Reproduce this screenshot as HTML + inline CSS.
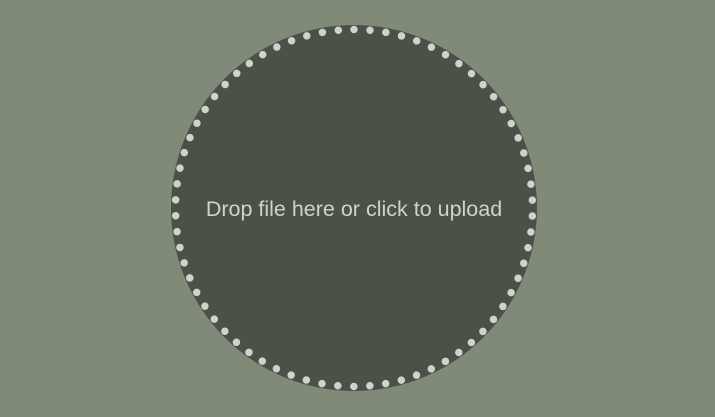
<!DOCTYPE html>
<html><head><style>
html,body{margin:0;padding:0;width:715px;height:417px;background:#7f8a78;overflow:hidden}
svg{position:absolute;left:0;top:0}
</style></head><body>
<svg width="715" height="417">
<circle cx="354" cy="208" r="183" fill="#4b5147"/>
<circle cx="354" cy="208" r="178.5" fill="none" stroke="#d0d3cd" stroke-width="7.5" stroke-linecap="round" stroke-dasharray="0 16.02" transform="rotate(-90 354 208)"/>
<text x="354" y="216" text-anchor="middle" font-family="Liberation Sans, sans-serif" font-size="21.5" fill="#cfd2cc">Drop file here or click to upload</text>
</svg>
</body></html>
